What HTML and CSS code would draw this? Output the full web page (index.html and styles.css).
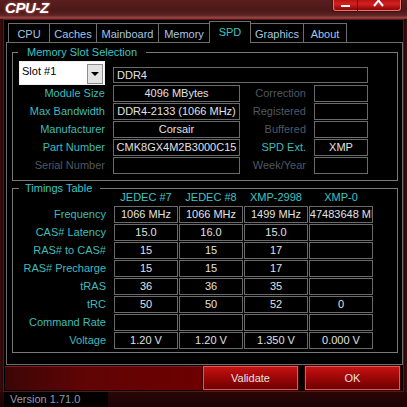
FILE: index.html
```html
<!DOCTYPE html>
<html>
<head>
<meta charset="utf-8">
<title>CPU-Z</title>
<link rel="stylesheet" href="styles.css">
</head>
<body>
<div class="window">
  <div class="titlebar">
    <span class="title">CPU-Z</span>
    <div class="caption">
      <div class="cbtn min"><span class="minbar"></span></div>
      <div class="cbtn close"><svg class="xglyph" width="12" height="8" viewBox="0 0 12 8"><path d="M1 -5 L10 6 M10 -5 L1 6" stroke="#ffffff" stroke-width="2" fill="none"/></svg></div>
    </div>
  </div>
  <div class="frame">
    <div class="tabs">
      <div class="tab t-cpu">CPU</div>
      <div class="tab t-caches">Caches</div>
      <div class="tab t-mainboard">Mainboard</div>
      <div class="tab t-memory">Memory</div>
      <div class="tab t-spd active">SPD</div>
      <div class="tab t-graphics">Graphics</div>
      <div class="tab t-about">About</div>
    </div>
    <div class="panel">
      <div class="group g-slot">
        <div class="gtitle gt-slot">Memory Slot Selection</div>
        <div class="slot-grid">
          <div class="combo"><span class="combo-text">Slot #1</span><span class="combo-btn"><span class="tri"></span></span></div>
          <div class="val ddr">DDR4</div>
          <div class="lbl">Module Size</div><div class="val">4096 MBytes</div><div class="lbl dim">Correction</div><div class="val"></div>
          <div class="lbl">Max Bandwidth</div><div class="val">DDR4-2133 (1066 MHz)</div><div class="lbl dim">Registered</div><div class="val"></div>
          <div class="lbl">Manufacturer</div><div class="val">Corsair</div><div class="lbl dim">Buffered</div><div class="val"></div>
          <div class="lbl">Part Number</div><div class="val">CMK8GX4M2B3000C15</div><div class="lbl">SPD Ext.</div><div class="val">XMP</div>
          <div class="lbl dim">Serial Number</div><div class="val"></div><div class="lbl dim">Week/Year</div><div class="val"></div>
        </div>
      </div>
      <div class="group g-tim">
        <div class="gtitle gt-tim">Timings Table</div>
        <div class="tim-grid">
          <div class="lbl"></div><div class="hdr">JEDEC #7</div><div class="hdr">JEDEC #8</div><div class="hdr">XMP-2998</div><div class="hdr">XMP-0</div>
          <div class="lbl">Frequency</div><div class="val">1066 MHz</div><div class="val">1066 MHz</div><div class="val">1499 MHz</div><div class="val"><span>2147483648 MHz</span></div>
          <div class="lbl">CAS# Latency</div><div class="val">15.0</div><div class="val">16.0</div><div class="val">15.0</div><div class="val"></div>
          <div class="lbl">RAS# to CAS#</div><div class="val">15</div><div class="val">15</div><div class="val">17</div><div class="val"></div>
          <div class="lbl">RAS# Precharge</div><div class="val">15</div><div class="val">15</div><div class="val">17</div><div class="val"></div>
          <div class="lbl">tRAS</div><div class="val">36</div><div class="val">36</div><div class="val">35</div><div class="val"></div>
          <div class="lbl">tRC</div><div class="val">50</div><div class="val">50</div><div class="val">52</div><div class="val">0</div>
          <div class="lbl">Command Rate</div><div class="val"></div><div class="val"></div><div class="val"></div><div class="val"></div>
          <div class="lbl">Voltage</div><div class="val">1.20 V</div><div class="val">1.20 V</div><div class="val">1.350 V</div><div class="val">0.000 V</div>
        </div>
      </div>
    </div>
    <div class="bottom">
      <div class="band"></div>
      <div class="btn b-validate">Validate</div>
      <div class="btn b-ok">OK</div>
    </div>
  </div>
  <div class="status"><span class="version">Version 1.71.0</span><span class="status-rest"></span></div>
</div>
</body>
</html>
```
FILE: styles.css
```css
* { box-sizing: border-box; }
html, body { margin: 0; padding: 0; }
body {
  width: 407px;
  height: 407px;
  overflow: hidden;
  background: #1c0505;
  font-family: "Liberation Sans", Arial, sans-serif;
  font-size: 11px;
}
.window {
  width: 407px;
  height: 407px;
  display: flex;
  flex-direction: column;
  background: linear-gradient(90deg, #3a0c0c 0, #230606 4px, #230606 403px, #3a0c0c 407px);
}

/* title bar */
.titlebar {
  height: 19px;
  flex: none;
  display: flex;
  justify-content: space-between;
  align-items: flex-start;
  background: linear-gradient(180deg, #5a1e1e 0, #4c1818 60%, #5e2424 85%, #a04a4a 100%);
  border-bottom: 1px solid #8a3636;
  padding-left: 5px;
}
.title {
  color: #ffffff;
  font-weight: bold;
  font-style: italic;
  font-size: 15px;
  line-height: 16px;
  letter-spacing: -0.4px;
  margin-top: 0;
  text-shadow: 0 0 3px #c06060;
}
.caption {
  display: flex;
  margin-right: 6px;
  margin-top: -2px;
}
.cbtn {
  height: 13px;
  border: 1px solid #e07a7a;
  border-top: none;
  background: linear-gradient(180deg, #a80e0e, #d42020 50%, #8a0606);
  box-shadow: 0 0 0 1px #4a0a0a;
  display: flex;
  justify-content: center;
  align-items: flex-end;
}
.min { width: 25px; border-radius: 0 0 0 3px; padding-bottom: 3px; }
.close { width: 43px; border-left: none; border-radius: 0 0 3px 0; align-items: flex-start; padding-top: 2px; }
.minbar { width: 9px; height: 2px; background: #ffffff; }
.xglyph { display: block; }

/* frame */
.frame {
  flex: none;
  height: 373px;
  margin: 0 3px;
  border: 1px solid #5c1616;
  background: #000000;
  display: flex;
  flex-direction: column;
}
.tabs {
  flex: none;
  height: 21px;
  margin: 1px 0 0 4px;
  display: flex;
  align-items: flex-end;
  position: relative;
  z-index: 1;
}
.tab {
  height: 19px;
  border: 1px solid #6e6e6e;
  border-bottom: none;
  color: #a6c6e4;
  text-align: center;
  line-height: 16px;
  padding-top: 2px;
  margin-left: -1px;
  background: #000000;
}
.tab:first-child { margin-left: 0; }
.tab.active {
  height: 22px;
  margin-bottom: -1px;
  color: #3cc4c4;
  padding-top: 2px;
  position: relative;
}
.t-cpu { width: 42px; }
.t-caches { width: 48px; }
.t-mainboard { width: 63px; }
.t-memory { width: 52px; }
.t-spd { width: 42px; }
.t-graphics { width: 54px; }
.t-about { width: 44px; }

.panel {
  flex: none;
  height: 323px;
  margin-left: 2px;
  border: 1px solid #6e6e6e;
  padding: 9px 4px 0 5px;
}

.group {
  width: 386px;
  border: 1px solid #7a7a7a;
}
.gtitle {
  width: max-content;
  line-height: 13px;
  margin-top: -7px;
  background: #000000;
  color: #3cc4c4;
}
.gt-slot { margin-left: 5px; padding: 0 9px; }
.gt-tim { margin-left: 6px; padding: 0 8px 0 6px; margin-bottom: -5px; }

.g-slot { padding-bottom: 6px; }
.g-tim { margin-top: 7px; padding-bottom: 3px; }

.lbl {
  color: #3cbcbc;
  text-align: right;
  line-height: 17px;
  white-space: nowrap;
}
.lbl.dim { color: #4e5864; }

.val {
  height: 17px;
  border: 1px solid #6a6a6a;
  color: #e2e2e2;
  display: flex;
  justify-content: center;
  align-items: center;
  white-space: nowrap;
  overflow: hidden;
  line-height: 15px;
}
.val span { flex: none; }

.slot-grid {
  margin-top: 2px;
  display: grid;
  grid-template-columns: 92px 127px 58px 54px;
  grid-template-rows: 23px repeat(5, 17px);
  column-gap: 8px;
  row-gap: 1px;
}
.slot-grid .lbl { padding-right: 0; }
.combo {
  margin-left: 6px;
  width: 86px;
  height: 24px;
  background: #ffffff;
  border: 1px solid #f0f0f0;
  display: flex;
  align-items: flex-start;
  justify-content: space-between;
  padding: 1px 1px 0 2px;
}
.combo-text {
  color: #000000;
  line-height: 14px;
  padding-top: 1px;
}
.combo-btn {
  width: 16px;
  height: 20px;
  margin-top: 1px;
  background: #e4e4e4;
  border: 1px solid #8c8c8c;
  display: flex;
  justify-content: center;
  align-items: center;
}
.tri {
  width: 0;
  height: 0;
  border-left: 4px solid transparent;
  border-right: 4px solid transparent;
  border-top: 4px solid #000000;
}
.ddr {
  grid-column: 2 / 5;
  height: 16px;
  align-self: end;
  margin-bottom: 1px;
  justify-content: flex-start;
  padding-left: 3px;
}

.tim-grid {
  display: grid;
  grid-template-columns: 100px 64px 64px 64px 64px;
  grid-template-rows: 15px repeat(8, 17px);
  row-gap: 1px;
  column-gap: 1px;
}
.tim-grid .lbl { padding-right: 8px; margin-right: -1px; }
.hdr {
  color: #3cc4c4;
  text-align: center;
  line-height: 15px;
  white-space: nowrap;
}

/* bottom buttons */
.bottom {
  flex: none;
  height: 26px;
  margin-top: 0;
  display: flex;
  align-items: flex-start;
  padding-top: 1px;
}
.band {
  width: 198px;
  height: 24px;
  margin-left: 1px;
  background: linear-gradient(90deg, #3c0606 0, #600404 40%, #6e0000 100%);
  border-top: 1px solid #7a2020;
}
.btn {
  width: 95px;
  height: 24px;
  border: 1px solid #d06060;
  box-shadow: 0 0 0 1px #3a0000;
  background: linear-gradient(180deg, #c41414 0, #a40808 40%, #6e0000 100%);
  color: #e4e4e4;
  text-align: center;
  line-height: 22px;
}
.b-validate { margin-left: 0; }
.b-ok { margin-left: 7px; }

/* status */
.status {
  flex: 1;
  display: flex;
  background: linear-gradient(180deg, #2a0606, #1a0303);
}
.version {
  margin-left: 4px;
  width: 104px;
  background: #050000;
  color: #8a9cb0;
  padding-left: 6px;
  line-height: 15px;
}
.status-rest { flex: 1; }
```
